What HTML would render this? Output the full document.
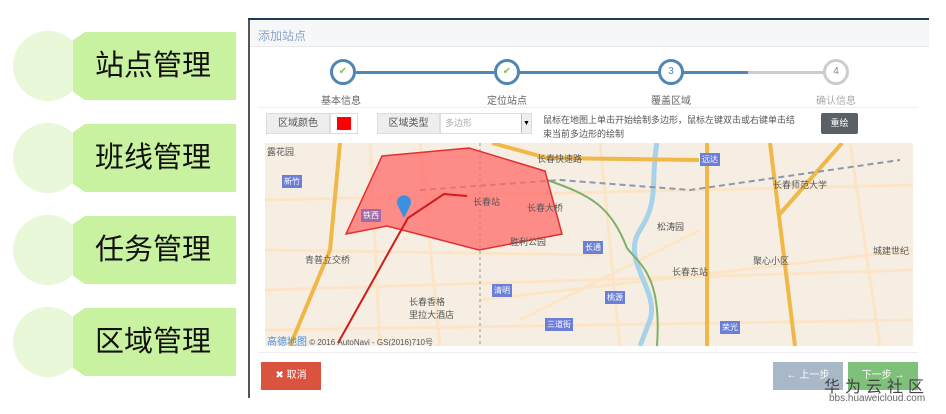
<!DOCTYPE html>
<html><head><meta charset="utf-8"><style>
*{margin:0;padding:0;box-sizing:border-box}
body{width:946px;height:414px;background:#fff;position:relative;overflow:hidden;font-family:"Liberation Sans","Noto Sans CJK SC",sans-serif}
.a{position:absolute}
.circ{position:absolute;left:13px;width:70px;height:70px;border-radius:50%;background:#e8f8d8}
.bar{position:absolute;left:73px;width:163px;height:68px;background:#c9f2a0;font-size:29px;color:#111;line-height:68px;padding-left:22px;clip-path:polygon(12px 0,100% 0,100% 100%,12px 100%,0 88%,0 12%)}
.step{position:absolute;width:26px;height:26px;border-radius:50%;border:3px solid #4f86b4;background:#fff;text-align:center;line-height:20px;font-size:10px;color:#4f86b4}
.lbl{position:absolute;font-size:10px;color:#666;top:92px}
.map{left:265px;top:143px;width:648px;height:203px;background:#f6eee2;overflow:hidden}
.tag{position:absolute;background:#6b7fd6;color:#fff;font-size:8px;padding:1px 2px}
.mt{position:absolute;font-size:9px;color:#555}
</style></head><body>
<div class="circ" style="top:31px"></div><div class="bar" style="top:32px">站点管理</div>
<div class="circ" style="top:123px"></div><div class="bar" style="top:124px">班线管理</div>
<div class="circ" style="top:215px"></div><div class="bar" style="top:216px">任务管理</div>
<div class="circ" style="top:307px"></div><div class="bar" style="top:308px">区域管理</div>

<div class="a" style="left:248px;top:18px;width:2px;height:380px;background:#555"></div>
<div class="a" style="left:248px;top:18px;width:681px;height:2px;background:#1d3b5a"></div>
<div class="a" style="left:250px;top:20px;width:679px;height:27px;background:#f6f7f9;border-bottom:1px solid #e8e8e8;font-size:12px;color:#8aa6c4;padding:7px 8px">添加站点</div>

<div class="a" style="left:356px;top:71px;width:392px;height:3px;background:#4f86b4"></div>
<div class="a" style="left:748px;top:71px;width:80px;height:3px;background:#ccc"></div>
<div class="step" style="left:330px;top:59px;color:#8bc34a">✔</div>
<div class="step" style="left:494px;top:59px;color:#8bc34a">✔</div>
<div class="step" style="left:658px;top:59px">3</div>
<div class="step" style="left:823px;top:59px;border-color:#ccc;color:#888">4</div>
<div class="lbl" style="left:321px">基本信息</div>
<div class="lbl" style="left:487px">定位站点</div>
<div class="lbl" style="left:651px">覆盖区域</div>
<div class="lbl" style="left:816px;color:#aaa">确认信息</div>
<div class="a" style="left:258px;top:107px;width:660px;height:1px;background:#eee"></div>

<div class="a" style="left:266px;top:113px;width:64px;height:21px;background:#eee;border:1px solid #ddd;font-size:10px;color:#555;line-height:19px;text-align:center">区域颜色</div>
<div class="a" style="left:330px;top:113px;width:28px;height:21px;border:1px solid #ddd"></div>
<div class="a" style="left:337px;top:117px;width:14px;height:13px;background:#f00"></div>
<div class="a" style="left:377px;top:113px;width:63px;height:21px;background:#eee;border:1px solid #ddd;font-size:10px;color:#555;line-height:19px;text-align:center">区域类型</div>
<div class="a" style="left:440px;top:113px;width:92px;height:21px;border:1px solid #ddd;font-size:9px;color:#aaa;line-height:19px;padding-left:4px">多边形</div>
<div class="a" style="left:521px;top:114px;width:10px;height:19px;background:#eee;border-left:1px solid #bbb;font-size:7px;line-height:19px;text-align:center">▼</div>
<div class="a" style="left:543px;top:113px;width:252px;font-size:9px;color:#555;line-height:14px">鼠标在地图上单击开始绘制多边形，鼠标左键双击或右键单击结束当前多边形的绘制</div>
<div class="a" style="left:821px;top:113px;width:37px;height:21px;background:#5a6066;border-radius:2px;color:#fff;font-size:9px;line-height:21px;text-align:center">重绘</div>

<div class="a map">
<svg width="648" height="203" viewBox="265 143 648 203" style="position:absolute;left:0;top:0">
<g stroke="#fbe5c6" stroke-width="3" fill="none">
<path d="M265 200 L913 185"/><path d="M265 290 L913 270"/><path d="M420 143 L440 346"/><path d="M600 143 L620 346"/><path d="M480 300 L913 250"/><path d="M265 250 L600 255"/><path d="M850 143 L880 346"/>
<path d="M520 320 L700 230"/><path d="M265 330 L913 320"/><path d="M370 143 L380 346"/>
</g>
<path d="M657 143 C650 180 660 200 640 230 C620 260 660 290 650 320 L640 346" stroke="#a8d2ea" stroke-width="5" fill="none"/>
<g stroke="#f0b848" stroke-width="4" fill="none">
<path d="M340 143 L330 250 L290 346"/><path d="M707 143 L707 346"/><path d="M770 143 L795 346"/>
<path d="M842 143 L779 215"/><path d="M492 143 L547 158 L699 160"/>
</g>
<path d="M547 180 C590 195 610 205 627 248 C640 265 662 275 657 346" stroke="#7fb06a" stroke-width="2" fill="none"/>
<path d="M420 190 L560 180 L690 190 L900 160" stroke="#8a99b0" stroke-width="2" stroke-dasharray="6 4" fill="none"/>
<path d="M480 143 L480 346" stroke="#999" stroke-width="1" stroke-dasharray="3 3"/>
<polygon points="382,156 469,148 545,171 562,234 479,250 387,226 346,234" fill="#ff6a6a" fill-opacity="0.75" stroke="#e03030" stroke-width="1.5"/>
<path d="M338 343 L395 241 L408 218 L444 194 L467 196" stroke="#d21a1a" stroke-width="2" fill="none"/>
<path d="M404 218 L398 206 A7 7 0 1 1 410 206 Z" fill="#3d8fe0"/>
</svg>
<div class="mt" style="left:2px;top:2px">露花园</div>
<div class="tag" style="left:17px;top:32px">新竹</div>
<div class="tag" style="left:96px;top:66px;background:#a06aa8">铁西</div>
<div class="mt" style="left:208px;top:52px">长春站</div>
<div class="mt" style="left:262px;top:58px">长春大桥</div>
<div class="mt" style="left:272px;top:9px">长春快速路</div>
<div class="tag" style="left:435px;top:10px">远达</div>
<div class="mt" style="left:508px;top:35px">长春师范大学</div>
<div class="mt" style="left:392px;top:77px">松涛园</div>
<div class="tag" style="left:318px;top:98px">长通</div>
<div class="mt" style="left:245px;top:92px">胜利公园</div>
<div class="mt" style="left:40px;top:110px">青普立交桥</div>
<div class="mt" style="left:407px;top:122px">长春东站</div>
<div class="mt" style="left:488px;top:111px">聚心小区</div>
<div class="mt" style="left:608px;top:101px">城建世纪</div>
<div class="tag" style="left:227px;top:141px">清明</div>
<div class="tag" style="left:340px;top:148px">桃源</div>
<div class="mt" style="left:144px;top:152px">长春香格<br>里拉大酒店</div>
<div class="tag" style="left:280px;top:175px">三道街</div>
<div class="tag" style="left:455px;top:178px">荣光</div>
<div class="mt" style="left:2px;top:190px;font-size:8px"><span style="color:#4a8fd8;font-size:10px">高德地图</span> © 2016 AutoNavi - GS(2016)710号</div>
</div>
<div class="a" style="left:258px;top:352px;width:660px;height:1px;background:#eee"></div>
<div class="a" style="left:261px;top:362px;width:60px;height:28px;background:#d9533f;color:#fff;font-size:10px;line-height:28px;text-align:center">✖ 取消</div>
<div class="a" style="left:773px;top:362px;width:70px;height:28px;background:#a9b8c6;color:#fff;font-size:10px;line-height:28px;text-align:center">← 上一步</div>
<div class="a" style="left:848px;top:362px;width:70px;height:28px;background:#7fc07a;color:#fff;font-size:10px;line-height:28px;text-align:center">下一步 →</div>
<div class="a" style="left:824px;top:373px;font-size:16px;color:#444;letter-spacing:5px">华为云社区</div>
<div class="a" style="left:829px;top:393px;font-size:10px;color:#666">bbs.huaweicloud.com</div>
</body></html>
